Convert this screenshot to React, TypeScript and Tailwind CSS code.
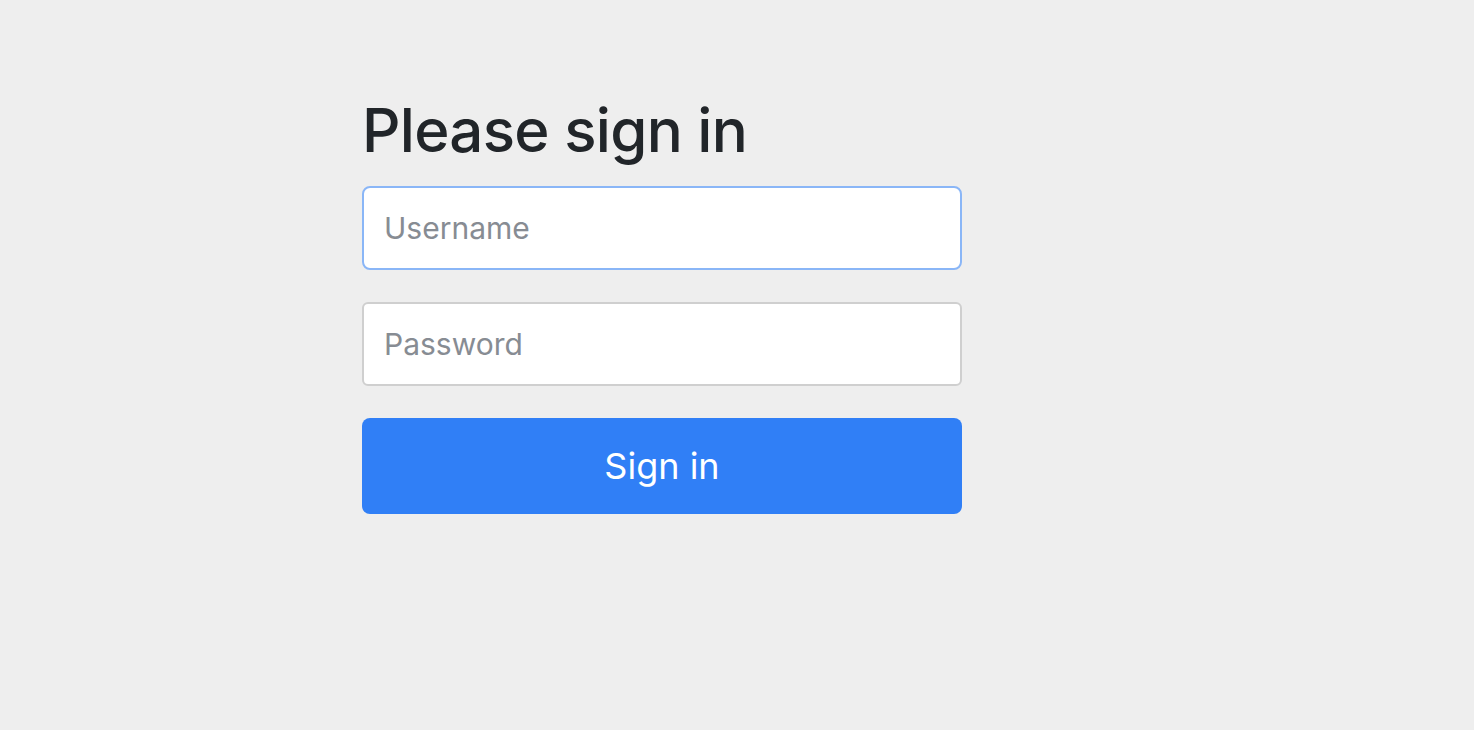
export default function App() {
  return (
    <div className="min-h-[730px] w-full bg-[#eeeeee] pl-[362px] pt-[94px]" style={{ fontFamily: 'Inter, "Noto Sans", sans-serif' }}>
      <form className="flex w-[600px] flex-col" onSubmit={(e) => e.preventDefault()}>
        <h2 className="mb-[20px] text-[60px] font-medium leading-[72px] tracking-[-0.7px] text-[#212529]">Please sign in</h2>
        <input
          className="h-[84px] w-full rounded-[8px] border-2 border-[#8ab6f7] bg-white px-[20px] text-[30px] text-[#212529] outline-none placeholder:text-[#878c93]"
          placeholder="Username"
        />
        <input
          type="password"
          className="mt-[32px] h-[84px] w-full rounded-[6px] border-2 border-[#cfcfcf] bg-white px-[20px] text-[30px] text-[#212529] outline-none placeholder:text-[#878c93]"
          placeholder="Password"
        />
        <button
          type="submit"
          className="mt-[32px] h-[96px] w-full rounded-[8px] bg-[#307ff6] text-[36px] font-normal text-white"
        >
          Sign in
        </button>
      </form>
    </div>
  );
}
